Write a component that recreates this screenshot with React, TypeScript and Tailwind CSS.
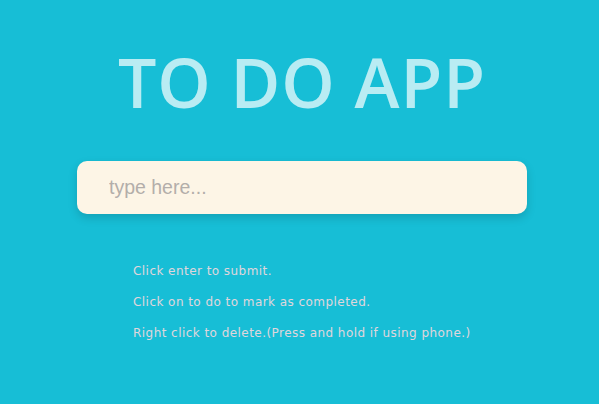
import React from "react";

export default function App() {
  return (
    <div className="min-h-screen w-full bg-[#17bed6] pl-[5px] flex flex-col items-center">
      <h1 className="mt-[38px] text-[68px] leading-[88px] font-[650] tracking-[1px] text-[#b9ecf3] [font-family:'Open_Sans',sans-serif]">
        TO DO APP
      </h1>
      <div className="mt-[35px] w-[450px]">
        <input
          type="text"
          placeholder="type here..."
          className="w-full h-[53px] rounded-[10px] bg-[#fdf5e6] pl-[32px] text-[19.5px] outline-none shadow-[0_4px_10px_rgba(0,0,0,0.15)] placeholder:text-[#b3aeaa] [font-family:'Liberation_Sans',Arial,sans-serif]"
        />
      </div>
      <div className="mt-[49px] w-[450px] pl-[56px] flex flex-col gap-[14px] text-[12px] leading-[17px] tracking-[0.45px] text-[#e0d6dc] [font-family:'DejaVu_Sans',Verdana,sans-serif]">
        <p>Click enter to submit.</p>
        <p>Click on to do to mark as completed.</p>
        <p>Right click to delete.(Press and hold if using phone.)</p>
      </div>
    </div>
  );
}
